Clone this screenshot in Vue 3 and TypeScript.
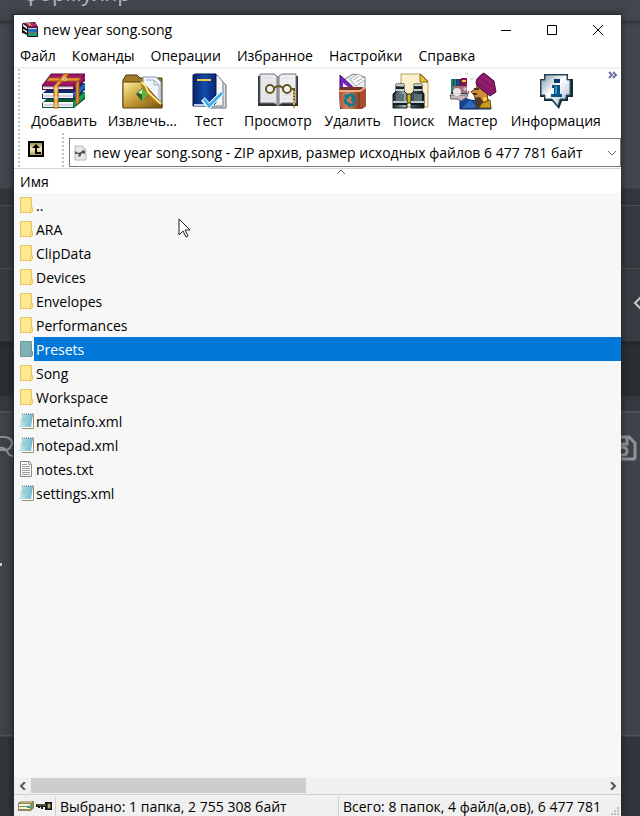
<script setup lang="ts">
import { ref } from 'vue'

type Kind = 'folder' | 'xml' | 'txt'
interface Entry { name: string; kind: Kind }
interface Tool { id: string; label: string }

const menus: string[] = ['Файл', 'Команды', 'Операции', 'Избранное', 'Настройки', 'Справка']

const tools: Tool[] = [
  { id: 'add', label: 'Добавить' },
  { id: 'extract', label: 'Извлечь...' },
  { id: 'test', label: 'Тест' },
  { id: 'view', label: 'Просмотр' },
  { id: 'delete', label: 'Удалить' },
  { id: 'find', label: 'Поиск' },
  { id: 'wizard', label: 'Мастер' },
  { id: 'info', label: 'Информация' },
]

const entries: Entry[] = [
  { name: '..', kind: 'folder' },
  { name: 'ARA', kind: 'folder' },
  { name: 'ClipData', kind: 'folder' },
  { name: 'Devices', kind: 'folder' },
  { name: 'Envelopes', kind: 'folder' },
  { name: 'Performances', kind: 'folder' },
  { name: 'Presets', kind: 'folder' },
  { name: 'Song', kind: 'folder' },
  { name: 'Workspace', kind: 'folder' },
  { name: 'metainfo.xml', kind: 'xml' },
  { name: 'notepad.xml', kind: 'xml' },
  { name: 'notes.txt', kind: 'txt' },
  { name: 'settings.xml', kind: 'xml' },
]

const selected = ref<string>('Presets')
const books = [
  { y: 19, color: '#169c55', dark: '#07592d' },
  { y: 10, color: '#2461b8', dark: '#0b2c6b' },
  { y: 1, color: '#9c1267', dark: '#5b0639' },
]
</script>

<template>
  <div class="desktop">
    <div class="backdrop" aria-hidden="true">
      <span class="clipped">формуляр</span>
      <svg class="loop" width="16" height="26" viewBox="0 0 16 26"><path d="M-2 3Q12 2 12 9Q11 15 6 16H-2M0 14Q5 13 8 19Q9 22 14 22" /></svg>
      <i class="dot"></i>
      <svg class="angle" width="10" height="16" viewBox="0 0 10 16"><path d="M9 1L2 8L9 15" /></svg>
      <svg class="save" width="18" height="26" viewBox="0 0 18 26"><path d="M-2 2H10L16 8V22Q16 24 14 24H-2M1 9H8V2M3 12Q8 12 8 16Q8 20 4 20Q0 20 0 16Q0 12 4 12" /></svg>
    </div>

    <main class="window">
      <header class="titlebar">
        <svg class="app-icon" width="16" height="16" viewBox="0 0 16 16">
          <path d="M1 1L13 0L16 5V15H6L0 11V2Z" fill="#171717" />
          <path d="M1 2L5 5V7L1 4ZM1 7L5 9V11L1 8ZM1 11L5 13V15L1 12Z" fill="#fff" />
          <path d="M2 1H13L15 4H6Z" fill="#b0287a" /><path d="M6 4H15V6H6Z" fill="#7d0c50" />
          <path d="M6 7H15V10H6Z" fill="#1d6fb6" /><path d="M6 12H15V14H6Z" fill="#18a374" />
          <path d="M5 1H7L10 4H8Z" fill="#e5b536" /><path d="M6 6.500H15M6 11H15" stroke="#a8dceb" />
        </svg>
        <h1>new year song.song</h1>
        <div class="win-buttons">
          <button aria-label="Свернуть"><svg width="12" height="12" viewBox="0 0 12 12"><path d="M1 6.5H11" /></svg></button>
          <button aria-label="Развернуть"><svg width="12" height="12" viewBox="0 0 12 12"><path d="M1.500 1.500H10.500V10.500H1.500Z" /></svg></button>
          <button aria-label="Закрыть"><svg width="12" height="12" viewBox="0 0 12 12"><path d="M1 1L11 11M11 1L1 11" /></svg></button>
        </div>
      </header>

      <nav class="menu"><button v-for="m in menus" :key="m">{{ m }}</button></nav>

      <section class="toolbar">
        <i class="grip"></i>
        <div class="tools">
          <button v-for="t in tools" :key="t.id">
            <svg v-if="t.id === 'add'" width="48" height="38" viewBox="0 0 48 38">
              <g v-for="b in books" :key="b.y">
                <path :d="`M2 ${b.y + 12}L12 ${b.y + 3}L45 ${b.y + 1}V${b.y + 8}L34 ${b.y + 17}H2Z`" :fill="b.dark" />
                <path :d="`M3 ${b.y + 11}H33V${b.y + 16}H3Z`" fill="#f3f3fa" />
                <path :d="`M4 ${b.y + 14}H33`" stroke="#b3b6c6" />
                <path :d="`M33 ${b.y + 11}L45 ${b.y + 1}V${b.y + 6}L34 ${b.y + 16}Z`" :fill="b.color" />
              </g>
              <path d="M2 14L11 2H45L33 14Z" fill="#a01468" stroke="#5a0a3c" />
              <path d="M14 14L24 2H29L18 14V36H14ZM9 6H41L38 9H7Z" fill="#ec9b32" stroke="#a8601c" />
              <path d="M36 11L39 8V30L36 33Z" fill="#e58e2c" stroke="#9c551b" />
              <path d="M16 14V35" stroke="#ffbf60" stroke-width="2" />
              <g fill="#54442c" stroke="#fff0a8"><rect x="15" y="17" width="2" height="2" /><rect x="15" y="25" width="2" height="2" /><rect x="15" y="32" width="2" height="2" /><rect x="23" y="6" width="3" height="2" /></g>
            </svg>
            <svg v-else-if="t.id === 'extract'" width="48" height="38" viewBox="0 0 48 38">
              <defs><linearGradient id="foldGold" x2="1" y2="1"><stop stop-color="#fff3a0" /><stop offset=".45" stop-color="#c9a13b" /><stop offset="1" stop-color="#775210" /></linearGradient></defs>
              <path d="M5 8L8 3H19L22 6H44V35H5Z" fill="#9d7928" stroke="#4d390f" />
              <path d="M25 5H38L43 10V31H25Z" fill="#f2f6fc" stroke="#8290ad" /><path d="M28 8H36L41 13V31M36 8V13H41" fill="none" stroke="#9aa8c2" />
              <path d="M5 10H22L27 13L44 32V36H5Z" fill="url(#foldGold)" stroke="#5c410e" />
              <path d="M22 10Q28 13 29 20L43 32Q33 30 24 27L26 20Z" fill="#a77a20" /><path d="M23 10Q28 13 30 20L43 32" fill="none" stroke="#ffe77a" stroke-width="2" />
              <path d="M18 22L24 16V29Z" fill="#285f31" /><path d="M24 16L30 22L24 29Z" fill="#65b343" /><path d="M20 21L24 17V22Z" fill="#d7ffc1" />
            </svg>
            <svg v-else-if="t.id === 'test'" width="48" height="38" viewBox="0 0 48 38">
              <defs><linearGradient id="testBlue"><stop stop-color="#092364" /><stop offset=".5" stop-color="#144aab" /><stop offset="1" stop-color="#082576" /></linearGradient></defs>
              <path d="M24 6H34L41 13V36H24Z" fill="#d8dbe2" stroke="#646974" /><path d="M22 3H32L38 10V34H22Z" fill="#f7f7fa" stroke="#777d87" />
              <path d="M8 3L10 2H31V31L28 34H8Z" fill="url(#testBlue)" stroke="#061648" /><path d="M9 32H29V34H9Z" fill="#c1cde4" />
              <path d="M12 8H26" stroke="#f3c84b" stroke-width="2" />
              <path d="M18 27L24 34L37 21" fill="none" stroke="#fff" stroke-width="5" /><path d="M19 27L24 34L37 21" fill="none" stroke="#40aee9" stroke-width="3" />
            </svg>
            <svg v-else-if="t.id === 'view'" width="48" height="38" viewBox="0 0 48 38">
              <path d="M4 4H44V34H4Z" fill="#313238" /><path d="M6 2H20L23 4V33L20 31H6Z" fill="#e7e8eb" stroke="#73747a" /><path d="M42 2H28L25 4V33L28 31H42Z" fill="#eeeef1" stroke="#73747a" />
              <path d="M9 6H18M8 10H20M8 22H20M8 26H20M28 6H39M28 23H39M28 27H39" stroke="#dadbe0" /><path d="M24 4V34" stroke="#8f9095" stroke-width="2" />
              <g fill="#ffffff88" stroke="#66551e" stroke-width="2"><circle cx="16" cy="17" r="4" /><circle cx="33" cy="17" r="4" /><path d="M20 16Q25 12 29 16M38 17H40V28" fill="none" /></g><path d="M40 19V36" stroke="#d5ad35" stroke-width="2" stroke-dasharray="2 1" />
            </svg>
            <svg v-else-if="t.id === 'delete'" width="48" height="38" viewBox="0 0 48 38">
              <defs><linearGradient id="binRed"><stop stop-color="#af543a" /><stop offset=".4" stop-color="#d9845c" /><stop offset="1" stop-color="#873a22" /></linearGradient></defs>
              <path d="M16 7L24 2L36 5V17H16Z" fill="#e9edef" stroke="#777f85" /><path d="M21 7L29 2L37 7L27 14Z" fill="#fff" stroke="#a1a9ad" /><path d="M24 8L30 4M27 10L34 6" stroke="#9da4ae" />
              <path d="M11 3V18H27Z" fill="#7622c8" stroke="#370c69" /><path d="M14 11V15H19Z" fill="#fff" />
              <path d="M10 17L13 15H33L37 17V34L33 37H11Z" fill="#753225" /><path d="M10 19H31V37H13L11 34Z" fill="url(#binRed)" /><path d="M31 19L37 16V34L31 37Z" fill="#a54d33" /><path d="M10 19H31L36 16" fill="none" stroke="#edac82" stroke-width="2" />
              <path d="M15 23L20 22V27L18 26Q17 29 20 31L18 33Q13 31 16 25ZM21 21Q27 22 26 27H28L25 31L21 27H23Q23 24 20 24ZM27 31Q25 35 21 34V36L18 33L21 30V32Q24 32 25 30Z" fill="#087d91" />
            </svg>
            <svg v-else-if="t.id === 'find'" width="48" height="38" viewBox="0 0 48 38">
              <defs><linearGradient id="lens"><stop stop-color="#172024" /><stop offset=".35" stop-color="#9babaf" /><stop offset=".65" stop-color="#405058" /><stop offset="1" stop-color="#101718" /></linearGradient></defs>
              <path d="M11 2H31L38 9V35H11Z" fill="#fbefcd" stroke="#b6a161" /><path d="M30 2V10H38Z" fill="#e8c92b" stroke="#7e6521" />
              <path d="M15 22H25V31H15Z" fill="#cfb71b" stroke="#29301c" /><path d="M6 12H14V19L17 22V36H3V22L6 19ZM24 12H32V19L34 22V36H21V22L24 19Z" fill="url(#lens)" stroke="#172024" />
              <path d="M6 13H14M24 13H32M6 18H14M24 18H32M3 30H17M21 30H34" stroke="#bec9c8" stroke-width="2" /><path d="M3 32H17M21 32H34M6 16H14M24 16H32" stroke="#151c1f" stroke-width="2" /><path d="M6 22H14V29H6ZM24 22H32V29H24Z" fill="#587078" />
            </svg>
            <svg v-else-if="t.id === 'wizard'" width="48" height="38" viewBox="0 0 48 38">
              <path d="M13 24Q20 30 31 28H40L42 37H11V28Z" fill="#17459d" stroke="#092158" /><path d="M13 36L21 28L29 36Z" fill="#3167b5" />
              <path d="M30 12L38 19L39 30L32 34L27 28L25 23L22 20L27 16Z" fill="#d18a39" stroke="#6e3e18" /><path d="M25 26L31 25L35 31L31 36H26Q28 30 25 26Z" fill="#4b3a28" /><path d="M25 17H30M24 22H28" stroke="#513018" stroke-width="2" />
              <path d="M28 7Q32 2 35 1L45 9L47 20L41 24L28 14Q26 10 28 7Z" fill="#8a1869" stroke="#4b113c" /><path d="M30 8L43 17M34 4L45 13" stroke="#96226f" stroke-width="2" />
              <path d="M33 31L41 28L42 36H30Z" fill="#c79b1e" stroke="#675216" /><circle cx="36" cy="27" r="2" fill="#ffd533" />
              <path d="M2 7H18V22H2Z" fill="#343246" /><path d="M3 7V20M6 7V21" stroke="#15876f" stroke-width="2" /><path d="M9 7V20" stroke="#2945a7" stroke-width="2" /><path d="M12 6H18V14H12Z" fill="#861349" /><path d="M4 14H18V21H4Z" fill="#a86c79" /><path d="M13 9H17" stroke="#ffc447" stroke-width="2" />
              <path d="M1 23H17L20 19L18 25L12 29L8 27H2Z" fill="#c6b9b8" stroke="#696168" /><circle cx="8" cy="20" r="4" fill="#fff" opacity=".8" /><path d="M11 2V4M18 1V3M16 2H20M23 5V8M21 7H25M14 17H18M16 15V19" stroke="#d5d5d5" />
            </svg>
            <svg v-else width="48" height="38" viewBox="0 0 48 38">
              <defs><linearGradient id="infoMetal" x2="1" y2="1"><stop stop-color="#7e96ad" /><stop offset=".45" stop-color="#fff" /><stop offset=".75" stop-color="#cad5df" /><stop offset="1" stop-color="#6d8094" /></linearGradient></defs>
              <path d="M12 2H36V7H41V25H36V29H30L27 37L20 29H12V25H8V7H12Z" fill="#142b36" /><path d="M13 3H35V8H38V23H34V27H28L26 34L20 27H13V23H9V8H13Z" fill="url(#infoMetal)" stroke="#31566a" />
              <rect x="22" y="7" width="6" height="4" fill="#0a3a71" /><path d="M20 13H28V22H30V25H19V22H22V16H20Z" fill="#095283" /><path d="M24 14V22" stroke="#2a9dca" stroke-width="2" />
            </svg>
            <span>{{ t.label }}</span>
          </button>
        </div>
        <button class="more" aria-label="Ещё"><svg width="10" height="8" viewBox="0 0 10 8"><path d="M1 1L4 4L1 7M5 1L8 4L5 7" /></svg></button>
      </section>

      <section class="address">
        <i class="grip"></i>
        <button class="up" aria-label="Вверх"><svg width="16" height="16" viewBox="0 0 16 16">
          <defs><linearGradient id="upGold" x2="0" y2="1"><stop stop-color="#8c8240" /><stop offset=".5" stop-color="#f5edbd" /><stop offset="1" stop-color="#9e9245" /></linearGradient></defs>
          <path d="M1 1H15V15H1Z" fill="url(#upGold)" stroke="#000" stroke-width="2" /><path d="M8 3L12 7H9V11H13V13H7V7H4Z" fill="#000" />
        </svg></button>
        <i class="grip"></i>
        <label class="combo">
          <svg width="13" height="16" viewBox="0 0 13 16"><path d="M1 1H9L12 4V15H1Z" fill="#e8e8e8" stroke="#b5b5b5" /><path d="M9 1V4H12" fill="#fff" stroke="#bbb" /><path d="M1 6L4 8L7 7L9 5L11 6L11 9L8 8L6 12L4 11L5 9L1 9Z" fill="#4b5359" /></svg>
          <select aria-label="Путь"><option>new year song.song - ZIP архив, размер исходных файлов 6 477 781 байт</option></select>
          <svg class="chevron" width="10" height="6" viewBox="0 0 10 6"><path d="M1 1L5 5L9 1" /></svg>
        </label>
      </section>

      <section class="files">
        <table>
          <thead><tr><th scope="col"><span>Имя</span><svg class="sort" width="10" height="6" viewBox="0 0 10 6"><path d="M1 5L5 1L9 5" /></svg></th></tr></thead>
          <tbody>
            <tr v-for="e in entries" :key="e.name" :class="{ selected: selected === e.name }" @click="selected = e.name">
              <td><div class="entry">
                <svg v-if="e.kind === 'folder'" width="16" height="16" viewBox="0 0 16 16">
                  <path class="fold" d="M1.500 .5H12.500V15.500H1.500Z" /><path class="fold" d="M11.500 10.500H13.500V14.500L11.500 15.500Z" />
                </svg>
                <svg v-else-if="e.kind === 'xml'" width="16" height="16" viewBox="0 0 16 16">
                  <defs><linearGradient id="padTeal"><stop stop-color="#d2eef2" /><stop offset="1" stop-color="#62b4c6" /></linearGradient></defs>
                  <path d="M5 1.500H14.500V15.500H3" fill="#fff" stroke="#9b8a70" /><path d="M3 1H14L12 14H0Z" fill="url(#padTeal)" /><path d="M4 4.500H12M3 6.500H12M3 8.500H12" stroke="#8ec9d6" /><path d="M3 1H14" stroke="#59727a" stroke-dasharray="1 1" />
                </svg>
                <svg v-else width="16" height="16" viewBox="0 0 16 16"><path d="M1.500 .5H10.500L12.500 3.500V15.500H1.500Z" fill="#fff" stroke="#858585" /><path d="M9.500 1V3.500H12M3 3.500H8M3 5.500H11M3 7.500H11M3 9.500H11M3 11.500H11M3 13.500H11" fill="none" stroke="#9a9a9a" /></svg>
                <span>{{ e.name }}</span>
              </div></td>
            </tr>
          </tbody>
        </table>
      </section>

      <div class="scroll">
        <button aria-label="Влево"><svg width="8" height="8" viewBox="0 0 8 8"><path d="M6 0L2 4L6 8" /></svg></button>
        <div class="track"><i></i></div>
        <button aria-label="Вправо"><svg width="8" height="8" viewBox="0 0 8 8"><path d="M2 0L6 4L2 8" /></svg></button>
      </div>

      <footer class="status">
        <div class="badges">
          <svg width="16" height="12" viewBox="0 0 16 12"><path d="M0 3L3 1H16V8L13 11H0Z" fill="#8e8b57" /><path d="M1 4H12V6H1ZM1 7H12V9H1Z" fill="#f0f1dc" /><path d="M3 2H14" stroke="#d8d7b0" /><path d="M9 7H12" stroke="#00aa93" stroke-width="2" /></svg>
          <svg width="16" height="12" viewBox="0 0 16 12"><path d="M0 4H9V2H16V10H9V7H7V9H5V7H4V8H2V7H0Z" fill="#171713" /><path d="M1 5H10" stroke="#88844d" /><path d="M12 4H14V8H12Z" fill="#eee9c3" stroke="#868050" /></svg>
        </div>
        <p>Выбрано: 1 папка, 2 755 308 байт</p>
        <p>Всего: 8 папок, 4 файл(а,ов), 6 477 781</p>
        <svg class="resize" width="8" height="8" viewBox="0 0 8 8"><path d="M6 0H8V2H6ZM3 3H5V5H3ZM6 3H8V5H6ZM0 6H2V8H0ZM3 6H5V8H3ZM6 6H8V8H6Z" /></svg>
      </footer>
    </main>

    <svg class="cursor" width="13" height="20" viewBox="0 0 13 20"><path d="M1 1V17L5 13L8 19L10 18L7 12H12Z" fill="#fff" stroke="#1c1c28" /></svg>
  </div>
</template>

<style>
body { margin: 0; }
</style>

<style scoped>
* { box-sizing: border-box; }
.desktop {
  position: relative;
  display: flex;
  min-height: 100vh;
  padding: 14px 19px 0 13px;
  overflow: hidden;
  font: 14px/20px "Open Sans", "Noto Sans", sans-serif;
  color: #000;
  background: linear-gradient(#42464e 0 20px, #31343a 21px, #42464e 26px 188px, #33363c 189px 205px, #4b4e53 205px 206px, #36393f 206px 268px, #4b4e53 268px 269px, #383b41 269px 341px, #222528 342px, #2b2f32 348px 396px, #36393f 397px 411px, #505359 411px 412px, #40434b 413px 735px, #505359 735px 736px, #32353b 737px);
}
.backdrop { position: absolute; inset: 0; color: #b5b7bb; }
.backdrop svg { position: absolute; fill: none; stroke: #919397; stroke-width: 2; }
.clipped { position: absolute; left: 23px; top: -20px; font-size: 22px; line-height: 24px; white-space: nowrap; }
.backdrop .loop { left: 0; top: 434px; }
.backdrop .angle { right: -3px; top: 295px; stroke: #c6c7ca; }
.backdrop .save { right: 3px; top: 435px; stroke-width: 3; }
.dot { position: absolute; left: 0; top: 563px; width: 2px; height: 3px; background: #ccc; }
.window {
  position: relative;
  flex: 1;
  min-width: 0;
  display: flex;
  flex-direction: column;
  border: solid #292b30;
  border-width: 1px 0 0 1px;
  background: #fff;
  box-shadow: 0 0 8px #0008;
}
button { padding: 0; border: 0; background: none; font: inherit; color: inherit; white-space: nowrap; }
svg { display: block; flex: none; }
.titlebar { display: flex; align-items: center; height: 30px; padding-left: 8px; gap: 5px; }
.titlebar h1 { margin: 0; font: inherit; }
.win-buttons { display: flex; margin-left: auto; }
.win-buttons button { display: grid; place-items: center; width: 46px; height: 28px; }
.win-buttons path { fill: none; stroke: #000; }
.menu { display: flex; align-items: center; gap: 16px; height: 22px; padding-left: 6px; }
.toolbar { display: flex; align-items: flex-start; height: 66px; border-top: 2px solid #f0f0f0; }
.grip { width: 2px; align-self: stretch; margin-left: 4px; background: repeating-linear-gradient(#c2c2c2 0 2px, #fff 2px 4px); }
.tools { display: grid; grid-template-columns: 78fr 78fr 55fr 82fr 67fr 55fr 62fr 104fr; flex: 1; padding: 3px 0 0 5px; }
.tools button { display: flex; flex-direction: column; align-items: center; gap: 1px; min-width: 0; }
.more { width: 13px; padding-top: 2px; }
.more path { fill: none; stroke: #7070a8; stroke-width: 2; }
.address { display: flex; height: 36px; border-bottom: 1px solid #d5d5d5; }
.up { align-self: flex-start; margin: 8px 18px 0 8px; }
.address .grip + .combo { margin-left: 5px; }
.address .up + .grip { margin-left: 0; }
.combo { display: flex; align-items: center; flex: 1; min-width: 0; height: 29px; margin-top: 5px; padding: 0 3px 0 4px; gap: 6px; border: 1px solid #777; background: #fff; }
.combo select { flex: 1; min-width: 0; height: 26px; padding: 0; appearance: none; border: 0; background: transparent; font: inherit; color: inherit; }
.chevron path, .sort path { fill: none; stroke: #666; }
.files { flex: 1; background: #f7f7f7; }
table { width: 100%; border-collapse: collapse; }
th, td { padding: 0; text-align: left; font-weight: normal; }
th { position: relative; height: 24px; padding: 2px 0 0 6px; background: #fff; }
.sort { position: absolute; left: 53%; top: 0; }
.entry { display: flex; align-items: center; height: 24px; padding-left: 5px; }
.entry span { flex: 1; height: 24px; margin-left: -1px; padding: 3px 0 0 2px; line-height: 20px; }
.fold { fill: #ffe794; stroke: #e8c65a; }
.selected span { color: #fff; background: #0078d7; }
.selected .fold { fill: #80b0b8; stroke: #6d9a99; }
.scroll { display: flex; height: 17px; background: #f0f0f0; }
.scroll button { display: grid; place-items: center; width: 17px; }
.scroll path { fill: none; stroke: #555; stroke-width: 2; }
.track { flex: 1; }
.track i { display: block; width: 48%; height: 15px; margin-top: 1px; background: #cdcdcd; }
.status { position: relative; display: grid; grid-template-columns: 41px 283fr 283fr; height: 22px; border-top: 1px solid #d0d0d0; background: #f0f0f0; }
.badges { display: flex; align-items: center; gap: 2px; padding-left: 4px; }
.status p { margin: 2px 0 0; padding: 0 0 0 4px; border-left: 1px solid #d0d0d0; line-height: 20px; white-space: nowrap; }
.resize { position: absolute; right: 2px; bottom: 1px; fill: #bcbcbc; }
.cursor { position: absolute; left: 178px; top: 218px; }
</style>
